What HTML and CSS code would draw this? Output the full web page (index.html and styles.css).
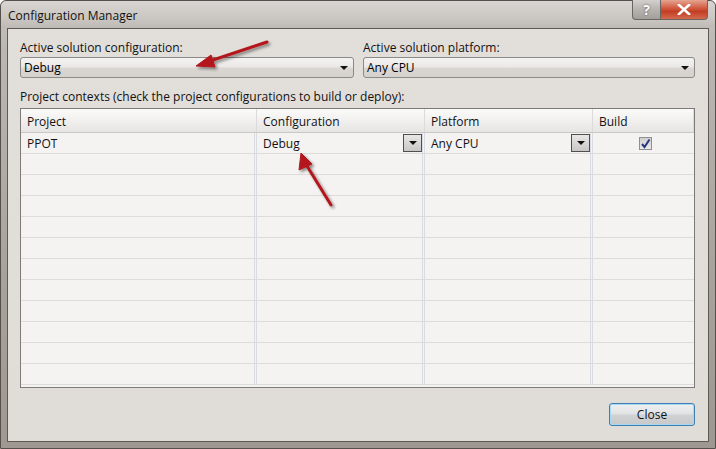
FILE: index.html
```html
<!DOCTYPE html>
<html>
<head>
<meta charset="utf-8">
<link rel="stylesheet" href="styles.css">
</head>
<body>
<div class="window">
  <div class="titlebar">
    <span class="title">Configuration Manager</span>
    <div class="caption-buttons">
      <div class="cap-btn help">?</div>
      <div class="cap-btn close-x">
        <svg width="14" height="11" viewBox="0 0 14 11"><path d="M2 1 L12 10 M12 1 L2 10" stroke="#fff" stroke-width="2.6" stroke-linecap="square"/></svg>
      </div>
    </div>
  </div>
  <div class="client">
    <div class="solution-row">
      <div class="field">
        <div class="label">Active solution configuration:</div>
        <div class="combo"><span>Debug</span><span class="tri"></span></div>
      </div>
      <div class="field">
        <div class="label">Active solution platform:</div>
        <div class="combo"><span>Any CPU</span><span class="tri"></span></div>
      </div>
    </div>
    <div class="label contexts">Project contexts (check the project configurations to build or deploy):</div>
    <div class="grid">
      <div class="row head">
        <div class="cell">Project</div>
        <div class="cell">Configuration</div>
        <div class="cell">Platform</div>
        <div class="cell">Build</div>
      </div>
      <div class="row">
        <div class="cell">PPOT</div>
        <div class="cell"><span>Debug</span><span class="dd"><span class="tri"></span></span></div>
        <div class="cell"><span>Any CPU</span><span class="dd"><span class="tri"></span></span></div>
        <div class="cell center"><span class="check"><svg width="11" height="11" viewBox="0 0 11 11"><path d="M2 6 L4.5 9 L9.5 1.5" stroke="#2a3680" stroke-width="2" fill="none"/></svg></span></div>
      </div>
      <div class="row"><div class="cell"></div><div class="cell"></div><div class="cell"></div><div class="cell"></div></div>
      <div class="row"><div class="cell"></div><div class="cell"></div><div class="cell"></div><div class="cell"></div></div>
      <div class="row"><div class="cell"></div><div class="cell"></div><div class="cell"></div><div class="cell"></div></div>
      <div class="row"><div class="cell"></div><div class="cell"></div><div class="cell"></div><div class="cell"></div></div>
      <div class="row"><div class="cell"></div><div class="cell"></div><div class="cell"></div><div class="cell"></div></div>
      <div class="row"><div class="cell"></div><div class="cell"></div><div class="cell"></div><div class="cell"></div></div>
      <div class="row"><div class="cell"></div><div class="cell"></div><div class="cell"></div><div class="cell"></div></div>
      <div class="row"><div class="cell"></div><div class="cell"></div><div class="cell"></div><div class="cell"></div></div>
      <div class="row"><div class="cell"></div><div class="cell"></div><div class="cell"></div><div class="cell"></div></div>
      <div class="row"><div class="cell"></div><div class="cell"></div><div class="cell"></div><div class="cell"></div></div>
      <div class="row last"><div class="cell"></div><div class="cell"></div><div class="cell"></div><div class="cell"></div></div>
    </div>
    <div class="footer">
      <button class="btn">Close</button>
    </div>
  </div>
  <svg class="arrows" width="716" height="449" viewBox="0 0 716 449">
    <defs>
      <filter id="sh" x="-20%" y="-20%" width="140%" height="140%">
        <feGaussianBlur in="SourceAlpha" stdDeviation="1.5"/>
        <feOffset dx="2" dy="2" result="b"/>
        <feComponentTransfer><feFuncA type="linear" slope="0.45"/></feComponentTransfer>
        <feMerge><feMergeNode/><feMergeNode in="SourceGraphic"/></feMerge>
      </filter>
    </defs>
    <g filter="url(#sh)" fill="#b3191c" stroke="#b3191c">
      <path d="M267 42 L210 61" stroke-width="3" stroke-linecap="round" fill="none"/>
      <path d="M196 66 L211 55 L215 67 Z" stroke-width="1"/>
      <path d="M331 205 L307 166" stroke-width="3" stroke-linecap="round" fill="none"/>
      <path d="M301 153 L299 170 L312 164 Z" stroke-width="1"/>
    </g>
  </svg>
</div>
</body>
</html>
```
FILE: styles.css
```css
* { box-sizing: border-box; }
html, body { margin: 0; padding: 0; }
body {
  width: 716px;
  height: 449px;
  overflow: hidden;
  font-family: "Open Sans", "Noto Sans", "Liberation Sans", sans-serif;
  font-size: 12px;
  color: #000;
  background: #fff;
}
.window {
  position: relative;
  width: 716px;
  height: 449px;
  background: linear-gradient(180deg, #c9c5c1 0%, #bcb7b2 10%, #a9a39d 60%, #9f9892 100%);
  border: 1px solid #55504c;
  border-radius: 6px 6px 0 0;
  display: flex;
  flex-direction: column;
}
.titlebar {
  height: 27px;
  display: flex;
  align-items: flex-start;
  padding: 0 7px 0 7px;
  background: linear-gradient(180deg, #d8d5d2 0%, #cbc7c3 60%, #bfbab5 100%);
  border-radius: 6px 6px 0 0;
}
.title {
  margin-top: 6px;
  font-size: 12px;
  color: #111;
}
.caption-buttons {
  margin-left: auto;
  display: flex;
  margin-top: -1px;
}
.cap-btn {
  height: 20px;
  display: flex;
  align-items: center;
  justify-content: center;
  border: 1px solid #6a6560;
  border-top: none;
}
.help {
  width: 29px;
  background: linear-gradient(180deg, #d3d0cd 0%, #b7b3af 50%, #a29e9a 100%);
  border-radius: 0 0 0 4px;
  color: #fff;
  font-weight: bold;
  font-size: 14px;
  text-shadow: 0 0 2px #444;
}
.close-x {
  width: 47px;
  border-left: none;
  background: linear-gradient(180deg, #e5a591 0%, #d0573e 45%, #c23d23 60%, #d46a4f 100%);
  border-radius: 0 0 4px 0;
}
.client {
  flex: 1;
  margin: 0 6px 6px 6px;
  border: 1px solid #5d5955;
  background: linear-gradient(180deg, #e2dfdb 0%, #e0ddd8 100%);
  padding: 10px 13px 0 12px;
  display: flex;
  flex-direction: column;
}
.solution-row {
  display: grid;
  grid-template-columns: 334px 332px;
  column-gap: 9px;
}
.label {
  height: 17px;
  line-height: 17px;
  color: #111;
}
.combo {
  height: 21px;
  border: 1px solid #8a8a88;
  border-radius: 3px;
  background: linear-gradient(180deg, #f4f3f2 0%, #ebe9e7 45%, #dad7d3 55%, #d5d2ce 100%);
  display: flex;
  align-items: center;
  justify-content: space-between;
  padding: 0 5px 0 3px;
  margin-top: 1px;
}
.tri {
  width: 0;
  height: 0;
  border-left: 4px solid transparent;
  border-right: 4px solid transparent;
  border-top: 4px solid #111;
}
.contexts {
  margin-top: 10px;
}
.grid {
  margin-top: 3px;
  height: 280px;
  border: 1px solid #7c7b79;
  background: #f4f3f1;
  display: flex;
  flex-direction: column;
}
.row {
  display: grid;
  grid-template-columns: 236px 168px 168px 1fr;
  height: 21px;
  border-bottom: 1px solid #dddcda;
}
.row.head {
  height: 24px;
  background: linear-gradient(180deg, #fbfbfa 0%, #f1f0ef 50%, #e6e5e3 100%);
  border-bottom: 1px solid #c9c8c6;
}
.cell {
  border-right: 3px double #d9dde3;
  padding: 0 0 0 6px;
  display: flex;
  align-items: center;
  justify-content: space-between;
  color: #111;
}
.cell:last-child { border-right: none; }
.cell.center { justify-content: center; padding: 0 0 0 4px; }
.head .cell { border-right: 1px solid #dcdbd9; padding-top: 1px; }
.dd {
  width: 19px;
  height: 18px;
  border: 1px solid #4f4f4f;
  background: linear-gradient(180deg, #e8e7e6 0%, #c9c7c5 100%);
  display: flex;
  align-items: center;
  justify-content: center;
}
.check {
  width: 13px;
  height: 13px;
  border: 1px solid #8f8f8f;
  background: linear-gradient(180deg, #cfcfcf 0%, #ebebeb 100%);
  display: flex;
  align-items: center;
  justify-content: center;
  margin-top: 1px;
}
.footer {
  display: flex;
  justify-content: flex-end;
  padding-top: 15px;
}
.btn {
  width: 86px;
  height: 23px;
  border: 1px solid #3c7fb1;
  border-radius: 3px;
  background: linear-gradient(180deg, #eef0f2 0%, #e1e3e5 45%, #cfd1d3 55%, #c7c9cb 100%);
  box-shadow: inset 0 0 0 1px #a9d9f2;
  font-family: inherit;
  font-size: 12px;
  color: #111;
  padding: 0;
}
.arrows {
  position: absolute;
  left: -1px;
  top: -1px;
  pointer-events: none;
}
```
